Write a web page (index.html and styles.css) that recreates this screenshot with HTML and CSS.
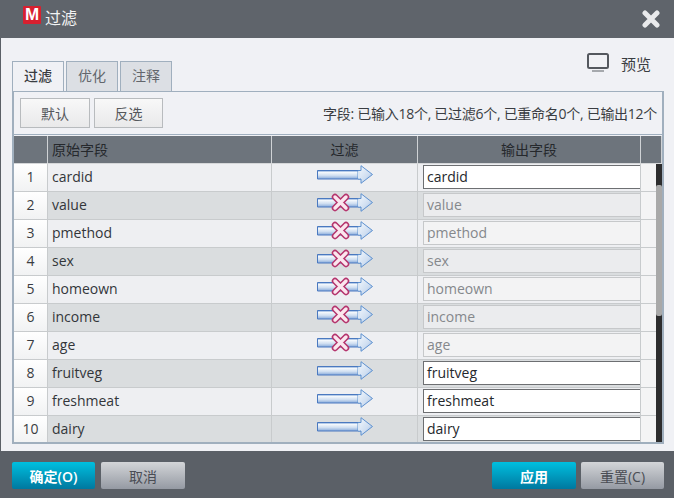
FILE: index.html
```html
<!DOCTYPE html>
<html lang="zh">
<head>
<meta charset="utf-8">
<title>过滤</title>
<link rel="stylesheet" href="styles.css">
</head>
<body>
<svg class="defs" width="0" height="0" aria-hidden="true">
  <defs>
    <linearGradient id="shaft" x1="0" y1="0" x2="0" y2="1">
      <stop offset="0" stop-color="#6d97d2"/>
      <stop offset=".22" stop-color="#f4f8fc"/>
      <stop offset=".6" stop-color="#cfdef1"/>
      <stop offset="1" stop-color="#86a9da"/>
    </linearGradient>
    <linearGradient id="head" x1="0" y1="0" x2="1" y2="1">
      <stop offset="0" stop-color="#f5f9fd"/>
      <stop offset=".6" stop-color="#cfdef1"/>
      <stop offset="1" stop-color="#86a9da"/>
    </linearGradient>
    <symbol id="arrow" viewBox="0 0 56 19">
      <path d="M.5 5.5H44V14H.5Z" fill="url(#shaft)" stroke="#4a79c0" stroke-width="1"/>
      <path d="M44 .7 55.5 9.5 44 18.3V14H41V5.5H44Z" fill="url(#head)" stroke="#5d90cf" stroke-width="1"/>
      <path d="M42 6.2V13.4" stroke="#dce7f4" stroke-width="2"/>
    </symbol>
    <symbol id="cross" viewBox="0 0 19 19">
      <path d="M4 4 15 15M15 4 4 15" fill="none" stroke="#b5346d" stroke-width="6.5" stroke-linecap="round"/>
      <path d="M4 4 15 15M15 4 4 15" fill="none" stroke="#fbe6ee" stroke-width="3.4" stroke-linecap="round"/>
    </symbol>
  </defs>
</svg>
<div class="window">
  <header class="titlebar">
    <div class="title-left">
      <span class="logo">M</span>
      <span class="title-text">过滤</span>
    </div>
    <svg class="close" width="18" height="18" viewBox="0 0 18 18" aria-label="关闭">
      <path d="M3 3 15 15M15 3 3 15" stroke="#e9eaec" stroke-width="5" stroke-linecap="round"/>
    </svg>
  </header>

  <main class="content">
    <div class="tabs-row">
      <div class="tabs">
        <span class="tab tab-active">过滤</span>
        <span class="tab">优化</span>
        <span class="tab">注释</span>
      </div>
      <div class="preview">
        <svg width="22" height="20" viewBox="0 0 22 20" aria-hidden="true">
          <rect x="1" y="1" width="20" height="14" rx="1.5" fill="none" stroke="#54585e" stroke-width="2"/>
          <rect x="5" y="17" width="12" height="2" fill="#a6a9ad"/>
        </svg>
        <span>预览</span>
      </div>
    </div>

    <section class="panel">
      <div class="toolbar">
        <div class="tool-buttons">
          <button class="tool-btn">默认</button>
          <button class="tool-btn tool-btn-narrow">反选</button>
        </div>
        <span class="summary">字段: 已输入18个, 已过滤6个, 已重命名0个, 已输出12个</span>
      </div>

      <div class="table">
        <div class="row head">
          <div class="cell"></div>
          <div class="cell name">原始字段</div>
          <div class="cell center">过滤</div>
          <div class="cell center">输出字段</div>
          <div class="cell"></div>
        </div>

        <div class="row"><div class="cell num">1</div><div class="cell name">cardid</div><div class="cell flow"><svg class="arrow"><use href="#arrow"/></svg></div><div class="cell out"><span class="field">cardid</span></div><div class="cell spare"></div></div>
        <div class="row alt off"><div class="cell num">2</div><div class="cell name">value</div><div class="cell flow"><svg class="arrow"><use href="#arrow"/></svg><svg class="cross"><use href="#cross"/></svg></div><div class="cell out"><span class="field">value</span></div><div class="cell spare"></div></div>
        <div class="row off"><div class="cell num">3</div><div class="cell name">pmethod</div><div class="cell flow"><svg class="arrow"><use href="#arrow"/></svg><svg class="cross"><use href="#cross"/></svg></div><div class="cell out"><span class="field">pmethod</span></div><div class="cell spare"></div></div>
        <div class="row alt off"><div class="cell num">4</div><div class="cell name">sex</div><div class="cell flow"><svg class="arrow"><use href="#arrow"/></svg><svg class="cross"><use href="#cross"/></svg></div><div class="cell out"><span class="field">sex</span></div><div class="cell spare"></div></div>
        <div class="row off"><div class="cell num">5</div><div class="cell name">homeown</div><div class="cell flow"><svg class="arrow"><use href="#arrow"/></svg><svg class="cross"><use href="#cross"/></svg></div><div class="cell out"><span class="field">homeown</span></div><div class="cell spare"></div></div>
        <div class="row alt off"><div class="cell num">6</div><div class="cell name">income</div><div class="cell flow"><svg class="arrow"><use href="#arrow"/></svg><svg class="cross"><use href="#cross"/></svg></div><div class="cell out"><span class="field">income</span></div><div class="cell spare"></div></div>
        <div class="row off"><div class="cell num">7</div><div class="cell name">age</div><div class="cell flow"><svg class="arrow"><use href="#arrow"/></svg><svg class="cross"><use href="#cross"/></svg></div><div class="cell out"><span class="field">age</span></div><div class="cell spare"></div></div>
        <div class="row alt"><div class="cell num">8</div><div class="cell name">fruitveg</div><div class="cell flow"><svg class="arrow"><use href="#arrow"/></svg></div><div class="cell out"><span class="field">fruitveg</span></div><div class="cell spare"></div></div>
        <div class="row"><div class="cell num">9</div><div class="cell name">freshmeat</div><div class="cell flow"><svg class="arrow"><use href="#arrow"/></svg></div><div class="cell out"><span class="field">freshmeat</span></div><div class="cell spare"></div></div>
        <div class="row alt"><div class="cell num">10</div><div class="cell name">dairy</div><div class="cell flow"><svg class="arrow"><use href="#arrow"/></svg></div><div class="cell out"><span class="field">dairy</span></div><div class="cell spare"></div></div>

        <div class="scrollbar"><div class="thumb"></div></div>
      </div>
    </section>
  </main>

  <footer class="footer">
    <div class="btn-group btn-group-left">
      <button class="btn primary">确定(O)</button>
      <button class="btn">取消</button>
    </div>
    <div class="btn-group btn-group-right">
      <button class="btn primary">应用</button>
      <button class="btn">重置(C)</button>
    </div>
  </footer>
</div>
</body>
</html>
```
FILE: styles.css
```css
* { box-sizing: border-box; }
html, body { margin: 0; padding: 0; }
body {
  width: 674px;
  height: 498px;
  overflow: hidden;
  font-family: "Open Sans", "Noto Sans CJK SC", sans-serif;
  font-size: 14px;
  color: #3a3d42;
  background: #5b6067;
}
.defs { display: block; height: 0; }
.window { display: flex; flex-direction: column; height: 498px; }

.titlebar {
  height: 38px;
  flex: none;
  background: #5f646b;
  display: flex;
  align-items: center;
  justify-content: space-between;
  padding: 0 14px 0 23px;
}
.title-left { display: flex; align-items: center; gap: 4px; }
.logo {
  width: 18px;
  height: 18px;
  margin-top: -8px;
  background: #d8202f;
  color: #fff;
  font: 700 17px/18px "Liberation Sans", sans-serif;
  text-align: center;
  border-radius: 1px;
}
.title-text { font-size: 16px; line-height: 36px; height: 38px; color: #f2f3f4; }
.close { display: block; }

.content {
  flex: none;
  height: 413px;
  margin-left: 1px;
  background: #f0f1f5;
  padding: 0 10px 7px 11px;
  display: flex;
  flex-direction: column;
}
.tabs-row {
  height: 53px;
  flex: none;
  display: flex;
  justify-content: space-between;
  align-items: flex-end;
}
.tabs { display: flex; gap: 2px; }
.tab {
  width: 52px;
  height: 30px;
  border: 1px solid #a0afbe;
  border-bottom: 0;
  background: #dcdfe4;
  color: #62666c;
  font-size: 14px;
  line-height: 28px;
  text-align: center;
}
.tab-active { background: #f0f1f5; color: #3a3d42; font-weight: 500; position: relative; top: 1px; margin-top: -1px; }
.preview {
  display: flex;
  align-items: center;
  gap: 12px;
  height: 26px;
  margin-bottom: 15px;
  padding-right: 13px;
  font-size: 15px;
  color: #3a3d42;
}

.panel {
  flex: 1;
  border-style: solid;
  border-width: 1px 2px 2px 2px;
  border-color: #a0afbe;
  display: flex;
  flex-direction: column;
  min-height: 0;
}
.toolbar {
  height: 43px;
  flex: none;
  display: flex;
  align-items: center;
  justify-content: space-between;
  padding: 0 5px 0 6px;
  border-bottom: 1px solid #a0afbe;
}
.tool-buttons { display: flex; gap: 4px; }
.tool-btn {
  width: 70px;
  height: 30px;
  border: 1px solid #b8bbbe;
  background: linear-gradient(#f8f8f8, #e9e9ea);
  color: #55585c;
  font: 14px "Noto Sans CJK SC", sans-serif;
  padding: 0;
}
.tool-btn-narrow { width: 69px; }
.summary { font-size: 14px; letter-spacing: -.28px; color: #3a3d42; white-space: nowrap; }

.table { position: relative; flex: 1; min-height: 0; overflow: hidden; margin-top: 1px; }
.row {
  display: grid;
  grid-template-columns: 34px 224px 146px 223px 21px;
  height: 28px;
  background: #eeeff2;
  border-bottom: 1px solid #c8cbcd;
}
.row.alt { background: #dadddf; }
.row.head {
  height: 28px;
  background: #6d747c;
  color: #25282c;
  border-bottom: 1px solid #d5d7d9;
}
.cell {
  display: flex;
  align-items: center;
  min-width: 0;
  padding-bottom: 2px;
  border-right: 1px solid #c8cbcd;
}
.head .cell { border-right-color: #cfd2d5; }
.center { justify-content: center; }
.name { padding-left: 4px; color: #33363a; }
.head .name { color: #25282c; }
.num {
  justify-content: center;
  background: linear-gradient(#ffffff, #f1f2f3);
  color: #3a3d42;
}
.flow { justify-content: center; align-items: flex-start; padding-top: 1px; position: relative; }
.arrow { width: 56px; height: 19px; display: block; }
.cross {
  position: absolute;
  left: 59px;
  top: 1px;
  width: 19px;
  height: 19px;
}
.out { align-items: flex-start; padding: 1px 0 0 5px; }
.field {
  display: block;
  width: 100%;
  height: 24px;
  background: #fff;
  border: 1px solid #6d6f72;
  border-right: 0;
  padding-left: 3px;
  line-height: 21px;
  color: #25282c;
}
.off .field {
  background: #ebecee;
  border-color: #c6c8ca;
  color: #85888c;
}
.off:not(.alt) .field { background: #f3f3f4; }
.spare { background: #f4f4f5; border-right: 0; }
.scrollbar {
  position: absolute;
  top: 28px;
  right: 0;
  bottom: 0;
  width: 6px;
  background: #2d2d2e;
}
.thumb {
  height: 131px;
  margin-top: 21px;
  background: #a9a9a9;
  border-radius: 2px;
}

.footer {
  flex: 1;
  display: flex;
  justify-content: space-between;
  align-items: flex-start;
  padding: 11px 10px 0 12px;
  background: #5b6067;
}
.btn-group { display: flex; gap: 5px; }
.btn-group-left { gap: 6px; }
.btn {
  width: 84px;
  height: 27px;
  border: 0;
  border-radius: 2px;
  background: linear-gradient(#d3d5d8, #959aa3);
  color: #4a4d54;
  font: 14px "Open Sans", "Noto Sans CJK SC", sans-serif;
  padding: 0;
}
.btn-group-left .primary,
.btn-group-right .btn:last-child { width: 83px; }
.btn.primary {
  background: linear-gradient(#00bfdf, #00789f);
  color: #fff;
  font-weight: 600;
}
```
